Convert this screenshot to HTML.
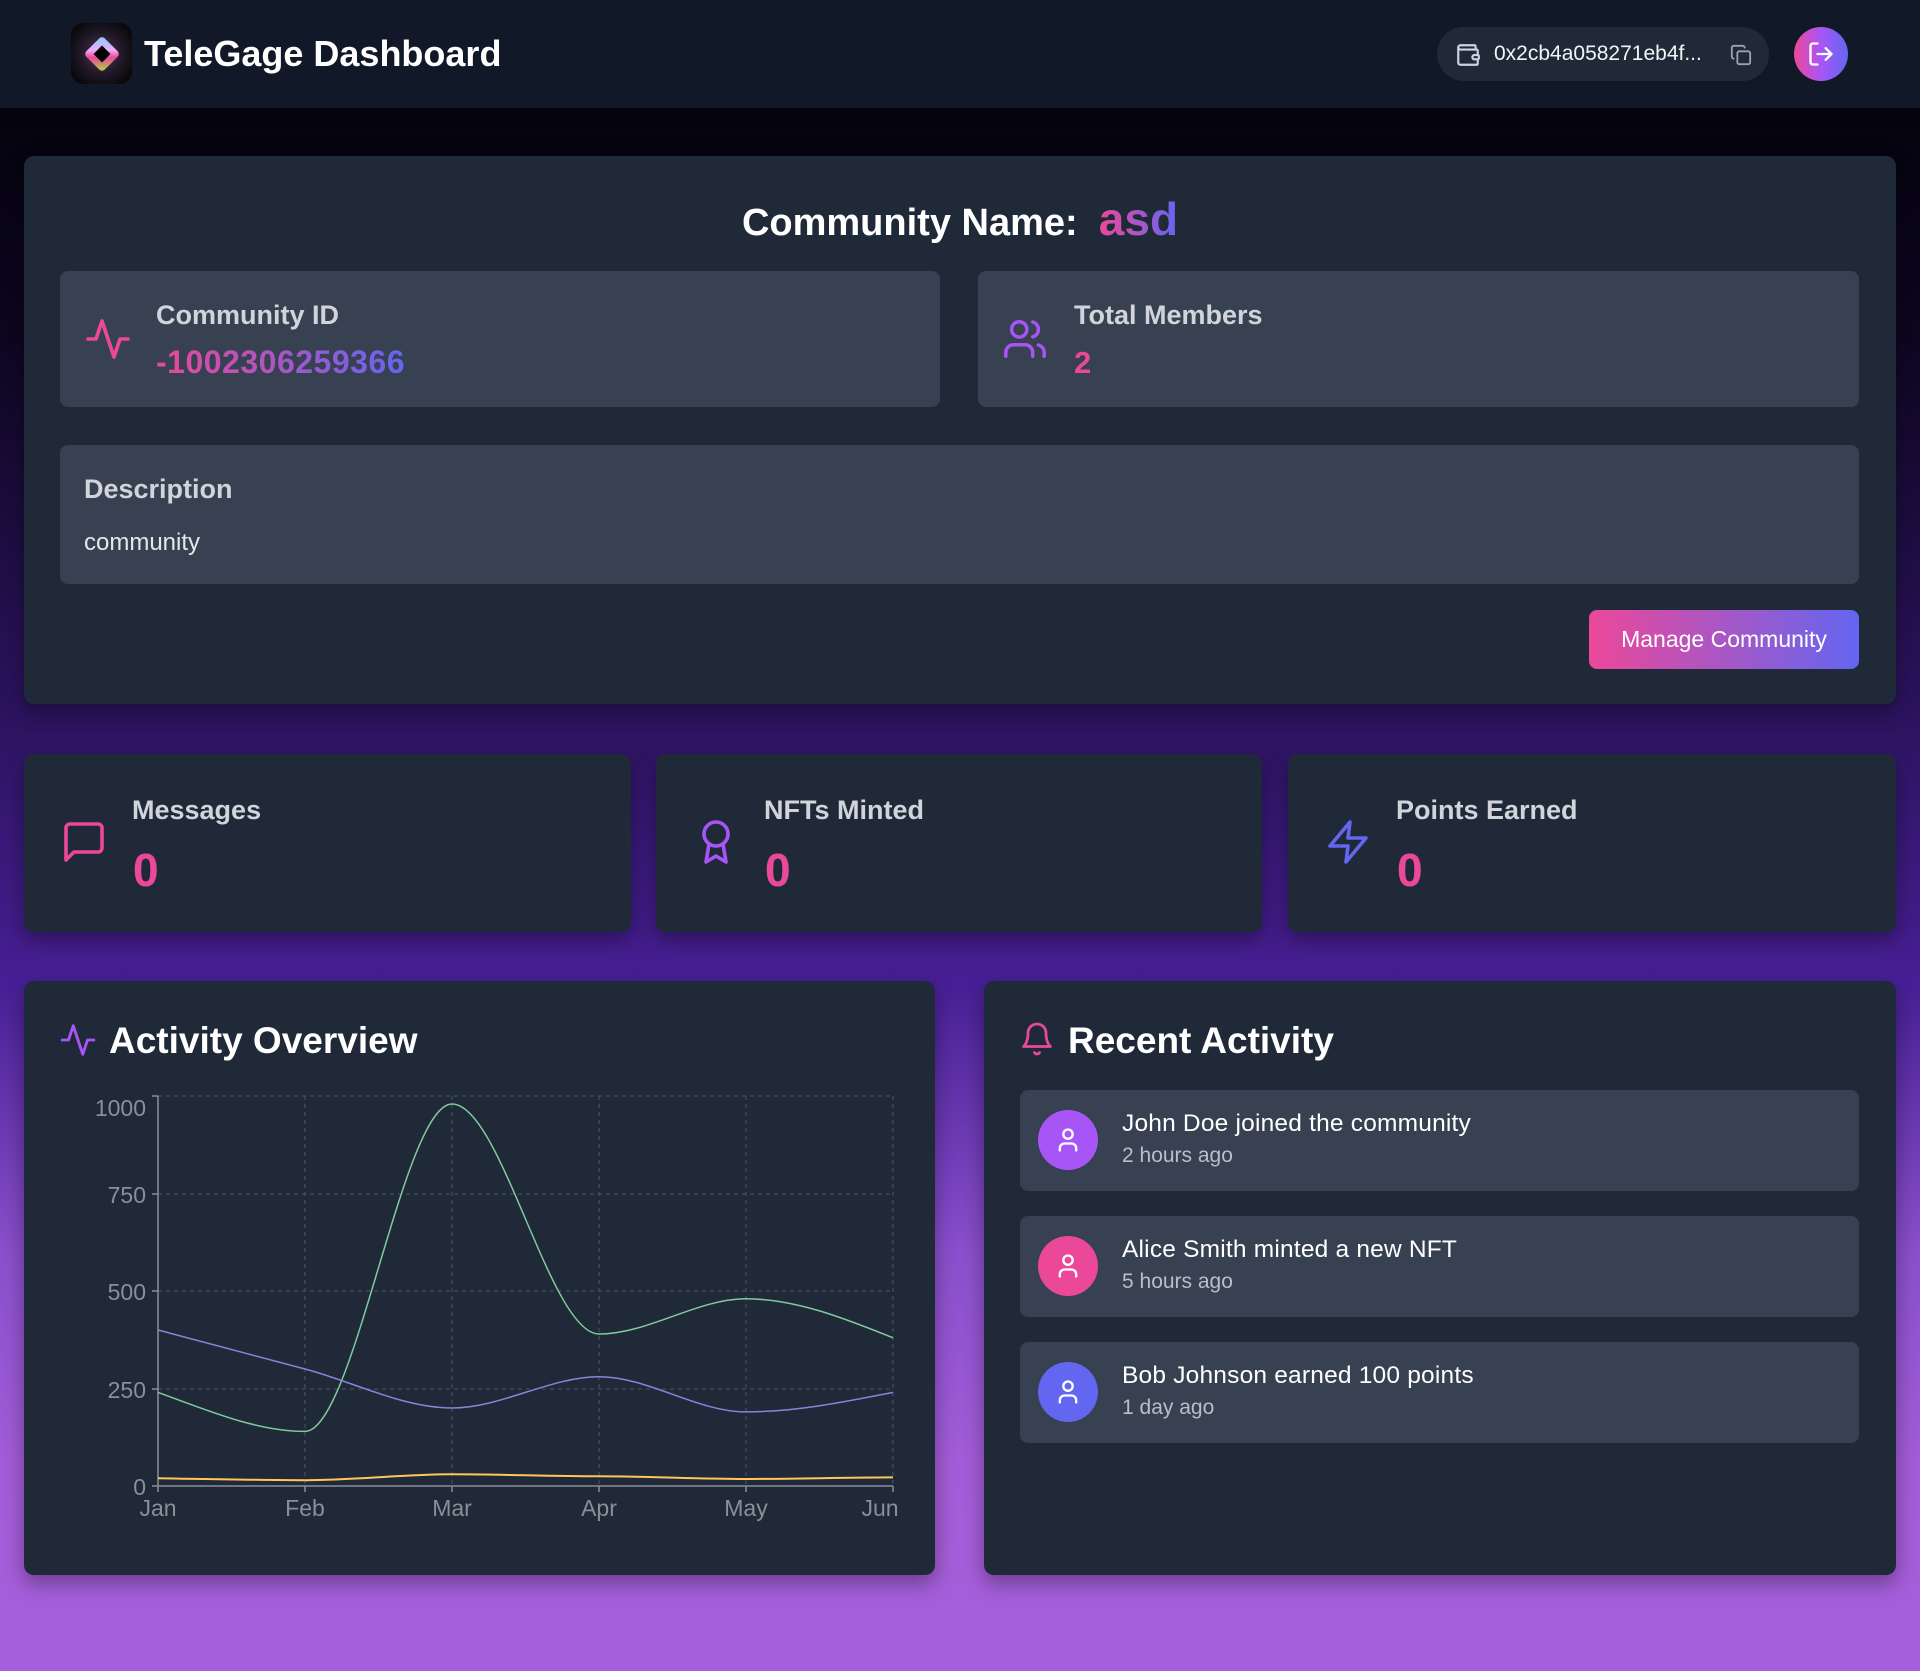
<!DOCTYPE html>
<html><head><meta charset="utf-8"><style>
*{margin:0;padding:0;box-sizing:border-box}
body{width:1920px;height:1671px;position:relative;overflow:hidden;font-family:"Liberation Sans","DejaVu Sans",sans-serif;
background:linear-gradient(180deg,#111827 0,#111827 108px,#05030e 108px,#0d0620 20%,#2e1462 44%,#471f95 59%,#8a4fcc 75%,#a35dd8 88%,#a55fda 100%);}
.a{position:absolute}
.card{position:absolute;background:#1f2937;border-radius:10px;box-shadow:0 8px 20px rgba(0,0,0,.35)}
.sub{position:absolute;background:#374151;border-radius:8px}
.lbl{position:absolute;color:#d1d5db;font-weight:bold;font-size:27px;white-space:nowrap}
.grad{background:linear-gradient(90deg,#ec4899,#6366f1);-webkit-background-clip:text;background-clip:text;color:transparent}
.big{position:absolute;font-size:46px;font-weight:bold;color:#ec4899}
.item{position:absolute;left:1020px;width:839px;height:101px;background:#374151;border-radius:8px}
.av{position:absolute;left:18px;top:20px;width:60px;height:60px;border-radius:50%}
.it1{position:absolute;left:102px;top:20px;font-size:24.5px;color:#fff;white-space:nowrap;letter-spacing:0.2px}
.it2{position:absolute;left:102px;top:54px;font-size:21px;color:#b9bec7;white-space:nowrap}
.ax{font-family:"Liberation Sans",sans-serif;font-size:23px;fill:#8a8f98}
</style></head><body>
<!-- header -->
<div class="a" style="left:71px;top:23px;width:61px;height:61px;border-radius:12px;background:radial-gradient(circle,#5a3b5e 0,#241a2a 45%,#0a0a0e 80%)"></div>
<div class="a" style="left:89px;top:41px;width:26px;height:26px;transform:rotate(45deg);border-radius:4px;background:linear-gradient(135deg,#7dd3fc,#f0abfc 40%,#ec4899 60%,#a3e635);"></div>
<div class="a" style="left:96px;top:48px;width:12px;height:12px;transform:rotate(45deg);background:#000"></div>
<div class="a" style="left:144px;top:33px;font-size:36px;font-weight:bold;color:#fff;white-space:nowrap">TeleGage Dashboard</div>
<div class="a" style="left:1437px;top:27px;width:332px;height:54px;border-radius:27px;background:#1f2937"></div>
<svg class="a" style="left:1455px;top:42px" width="26" height="26" viewBox="0 0 24 24" fill="none" stroke="#cbd5e1" stroke-width="2" stroke-linecap="round" stroke-linejoin="round"><path d="M19 7V4a1 1 0 0 0-1-1H5a2 2 0 0 0 0 4h15a1 1 0 0 1 1 1v4h-3a2 2 0 0 0 0 4h3a1 1 0 0 0 1-1v-2a1 1 0 0 0-1-1"/><path d="M3 5v14a2 2 0 0 0 2 2h15a1 1 0 0 0 1-1v-4"/></svg>
<div class="a" style="left:1494px;top:42px;font-size:21px;color:#f3f4f6;white-space:nowrap">0x2cb4a058271eb4f...</div>
<svg class="a" style="left:1730px;top:44px" width="22" height="22" viewBox="0 0 24 24" fill="none" stroke="#9ca3af" stroke-width="2" stroke-linecap="round" stroke-linejoin="round"><rect x="8" y="8" width="14" height="14" rx="2"/><path d="M4 16c-1.1 0-2-.9-2-2V4c0-1.1.9-2 2-2h10c1.1 0 2 .9 2 2"/></svg>
<div class="a" style="left:1794px;top:27px;width:54px;height:54px;border-radius:50%;background:linear-gradient(90deg,#ec4899,#a855f7,#6366f1)"></div>
<svg class="a" style="left:1807px;top:40px" width="28" height="28" viewBox="0 0 24 24" fill="none" stroke="#fff" stroke-width="2" stroke-linecap="round" stroke-linejoin="round"><path d="M9 21H5a2 2 0 0 1-2-2V5a2 2 0 0 1 2-2h4"/><polyline points="16 17 21 12 16 7"/><line x1="21" y1="12" x2="9" y2="12"/></svg>

<!-- main card -->
<div class="card" style="left:24px;top:156px;width:1872px;height:548px"></div>
<div class="a" style="left:0;width:1920px;top:192px;text-align:center;font-size:38px;font-weight:bold;color:#fff;white-space:nowrap">Community Name:&nbsp;&nbsp;<span class="grad" style="font-size:46px">asd</span></div>
<div class="sub" style="left:60px;top:271px;width:880px;height:136px"></div>
<div class="sub" style="left:978px;top:271px;width:881px;height:136px"></div>
<svg class="a" style="left:84px;top:315px" width="48" height="48" viewBox="0 0 24 24" fill="none" stroke="#ec4899" stroke-width="1.8" stroke-linecap="round" stroke-linejoin="round"><path d="M22 12h-4l-3 9L9 3l-3 9H2"/></svg>
<div class="lbl" style="left:156px;top:300px">Community ID</div>
<div class="a grad" style="left:156px;top:344px;font-size:32px;font-weight:bold;white-space:nowrap;letter-spacing:0.5px">-1002306259366</div>
<svg class="a" style="left:1002px;top:316px" width="46" height="46" viewBox="0 0 24 24" fill="none" stroke="#a855f7" stroke-width="1.8" stroke-linecap="round" stroke-linejoin="round"><path d="M16 21v-2a4 4 0 0 0-4-4H6a4 4 0 0 0-4 4v2"/><circle cx="9" cy="7" r="4"/><path d="M22 21v-2a4 4 0 0 0-3-3.87"/><path d="M16 3.13a4 4 0 0 1 0 7.75"/></svg>
<div class="lbl" style="left:1074px;top:300px">Total Members</div>
<div class="a" style="left:1074px;top:345px;font-size:31px;font-weight:bold;color:#ec4899">2</div>
<div class="sub" style="left:60px;top:445px;width:1799px;height:139px"></div>
<div class="lbl" style="left:84px;top:474px">Description</div>
<div class="a" style="left:84px;top:529px;font-size:24px;color:#e5e7eb">community</div>
<div class="a" style="left:1589px;top:610px;width:270px;height:59px;border-radius:8px;background:linear-gradient(90deg,#ec4899,#6366f1);color:#fff;font-size:23px;text-align:center;line-height:59px;white-space:nowrap">Manage Community</div>

<!-- stats -->
<div class="card" style="left:24px;top:754px;width:607px;height:178px"></div>
<div class="card" style="left:656px;top:754px;width:606px;height:178px"></div>
<div class="card" style="left:1288px;top:754px;width:608px;height:178px"></div>
<svg class="a" style="left:60px;top:818px" width="48" height="48" viewBox="0 0 24 24" fill="none" stroke="#ec4899" stroke-width="1.8" stroke-linecap="round" stroke-linejoin="round"><path d="M21 15a2 2 0 0 1-2 2H7l-4 4V5a2 2 0 0 1 2-2h14a2 2 0 0 1 2 2z"/></svg>
<div class="lbl" style="left:132px;top:795px">Messages</div>
<div class="big grad" style="left:133px;top:843px">0</div>
<svg class="a" style="left:692px;top:818px" width="48" height="48" viewBox="0 0 24 24" fill="none" stroke="#a855f7" stroke-width="1.8" stroke-linecap="round" stroke-linejoin="round"><circle cx="12" cy="8" r="6"/><path d="M15.48 12.89 17 22l-5-3-5 3 1.52-9.11"/></svg>
<div class="lbl" style="left:764px;top:795px">NFTs Minted</div>
<div class="big grad" style="left:765px;top:843px">0</div>
<svg class="a" style="left:1324px;top:818px" width="48" height="48" viewBox="0 0 24 24" fill="none" stroke="#6366f1" stroke-width="1.8" stroke-linecap="round" stroke-linejoin="round"><polygon points="13 2 3 14 12 14 11 22 21 10 12 10 13 2"/></svg>
<div class="lbl" style="left:1396px;top:795px">Points Earned</div>
<div class="big grad" style="left:1397px;top:843px">0</div>

<!-- activity overview -->
<div class="card" style="left:24px;top:981px;width:911px;height:594px"></div>
<svg class="a" style="left:59px;top:1021px" width="38" height="38" viewBox="0 0 24 24" fill="none" stroke="#a855f7" stroke-width="1.8" stroke-linecap="round" stroke-linejoin="round"><path d="M22 12h-4l-3 9L9 3l-3 9H2"/></svg>
<div class="a" style="left:109px;top:1020px;font-size:37px;font-weight:bold;color:#fff;white-space:nowrap">Activity Overview</div>
<svg class="a" style="left:0;top:0" width="1920" height="1671">
<g stroke="#4b5563" stroke-dasharray="4 4" stroke-width="1" fill="none">
<line x1="158" y1="1096" x2="893" y2="1096"/><line x1="158" y1="1194" x2="893" y2="1194"/><line x1="158" y1="1291" x2="893" y2="1291"/><line x1="158" y1="1389" x2="893" y2="1389"/>
<line x1="305" y1="1096" x2="305" y2="1486"/><line x1="452" y1="1096" x2="452" y2="1486"/><line x1="599" y1="1096" x2="599" y2="1486"/><line x1="746" y1="1096" x2="746" y2="1486"/><line x1="893" y1="1096" x2="893" y2="1486"/>
</g>
<g stroke="#8a8f98" stroke-width="1.5" fill="none">
<line x1="158" y1="1096" x2="158" y2="1486"/><line x1="158" y1="1486" x2="893" y2="1486"/>
<line x1="152" y1="1096" x2="158" y2="1096"/><line x1="152" y1="1194" x2="158" y2="1194"/><line x1="152" y1="1291" x2="158" y2="1291"/><line x1="152" y1="1389" x2="158" y2="1389"/><line x1="152" y1="1486" x2="158" y2="1486"/>
<line x1="158" y1="1486" x2="158" y2="1492"/><line x1="305" y1="1486" x2="305" y2="1492"/><line x1="452" y1="1486" x2="452" y2="1492"/><line x1="599" y1="1486" x2="599" y2="1492"/><line x1="746" y1="1486" x2="746" y2="1492"/><line x1="893" y1="1486" x2="893" y2="1492"/>
</g>
<g class="ax" text-anchor="end">
<text x="146" y="1116">1000</text><text x="146" y="1203">750</text><text x="146" y="1300">500</text><text x="146" y="1398">250</text><text x="146" y="1495">0</text>
</g>
<g class="ax" text-anchor="middle">
<text x="158" y="1516">Jan</text><text x="305" y="1516">Feb</text><text x="452" y="1516">Mar</text><text x="599" y="1516">Apr</text><text x="746" y="1516">May</text><text x="880" y="1516">Jun</text>
</g>
<path d="M158,1392.4 C207,1410 256,1431.4 305,1431.4 C354,1431.4 403,1104 452,1104 C501,1104 550,1334 599,1334 C648,1334 697,1298.8 746,1298.8 C795,1298.8 844,1318 893,1337.8" fill="none" stroke="#82ca9d" stroke-width="1.5"/>
<path d="M158,1330 C207,1343 256,1356 305,1369 C354,1382 403,1408 452,1408 C501,1408 550,1376.8 599,1376.8 C648,1376.8 697,1411.9 746,1411.9 C795,1411.9 844,1402 893,1392.4" fill="none" stroke="#8884d8" stroke-width="1.5"/>
<path d="M158,1478.2 C207,1479 256,1480.2 305,1480.2 C354,1480.2 403,1474.3 452,1474.3 C501,1474.3 550,1476.3 599,1476.3 C648,1476.3 697,1479 746,1479 C795,1479 844,1477.4 893,1477.4" fill="none" stroke="#ffc658" stroke-width="2"/>
</svg>

<!-- recent activity -->
<div class="card" style="left:984px;top:981px;width:912px;height:594px"></div>
<svg class="a" style="left:1019px;top:1021px" width="36" height="36" viewBox="0 0 24 24" fill="none" stroke="#ec4899" stroke-width="1.8" stroke-linecap="round" stroke-linejoin="round"><path d="M6 8a6 6 0 0 1 12 0c0 7 3 9 3 9H3s3-2 3-9"/><path d="M10.3 21a1.94 1.94 0 0 0 3.4 0"/></svg>
<div class="a" style="left:1068px;top:1020px;font-size:37px;font-weight:bold;color:#fff;white-space:nowrap">Recent Activity</div>

<div class="item" style="top:1090px"><div class="av" style="background:#a855f7"></div>
<svg class="a" style="left:34px;top:36px" width="28" height="28" viewBox="0 0 24 24" fill="none" stroke="#fff" stroke-width="2" stroke-linecap="round"><path d="M19 21v-2a4 4 0 0 0-4-4H9a4 4 0 0 0-4 4v2"/><circle cx="12" cy="7" r="4"/></svg>
<div class="it1">John Doe joined the community</div><div class="it2">2 hours ago</div></div>
<div class="item" style="top:1216px"><div class="av" style="background:#ec4899"></div>
<svg class="a" style="left:34px;top:36px" width="28" height="28" viewBox="0 0 24 24" fill="none" stroke="#fff" stroke-width="2" stroke-linecap="round"><path d="M19 21v-2a4 4 0 0 0-4-4H9a4 4 0 0 0-4 4v2"/><circle cx="12" cy="7" r="4"/></svg>
<div class="it1">Alice Smith minted a new NFT</div><div class="it2">5 hours ago</div></div>
<div class="item" style="top:1342px"><div class="av" style="background:#6366f1"></div>
<svg class="a" style="left:34px;top:36px" width="28" height="28" viewBox="0 0 24 24" fill="none" stroke="#fff" stroke-width="2" stroke-linecap="round"><path d="M19 21v-2a4 4 0 0 0-4-4H9a4 4 0 0 0-4 4v2"/><circle cx="12" cy="7" r="4"/></svg>
<div class="it1">Bob Johnson earned 100 points</div><div class="it2">1 day ago</div></div>
</body></html>
